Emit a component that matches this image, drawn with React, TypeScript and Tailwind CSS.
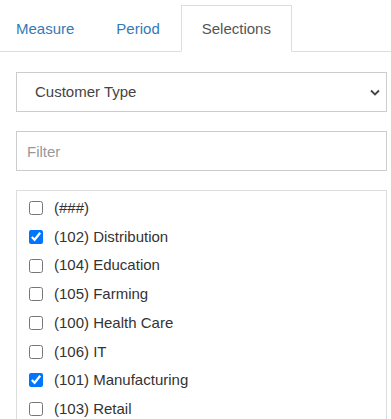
import { useState } from 'react';

const tabs = ['Measure', 'Period', 'Selections'];

const items = [
  { label: '(###)', checked: false },
  { label: '(102) Distribution', checked: true },
  { label: '(104) Education', checked: false },
  { label: '(105) Farming', checked: false },
  { label: '(100) Health Care', checked: false },
  { label: '(106) IT', checked: false },
  { label: '(101) Manufacturing', checked: true },
  { label: '(103) Retail', checked: false },
];

export default function App() {
  const [active, setActive] = useState('Selections');
  const [filter, setFilter] = useState('');

  return (
    <div className="w-[391px] h-[419px] overflow-hidden bg-white pt-[5px] font-['Liberation_Sans',Arial,sans-serif] text-[15px] text-[#555]">
      {/* Tabs */}
      <div className="flex border-b border-[#ddd] -ml-[5px]">
        {tabs.map((tab) => {
          const isActive = tab === active;
          return (
            <button
              key={tab}
              type="button"
              onClick={() => setActive(tab)}
              className={`-mb-px px-5 py-3 leading-[21px] border ${
                isActive
                  ? 'border-[#ddd] border-b-white bg-white text-[#555]'
                  : 'border-transparent text-[#337ab7]'
              }`}
            >
              {tab}
            </button>
          );
        })}
      </div>

      <div className="pl-4 pr-1 pt-5 flex flex-col gap-[19px]">
        {/* Dropdown */}
        <div className="relative h-10 border border-[#ccc] bg-white flex items-center pl-[18px]">
          <span className="text-[#444]">Customer Type</span>
          <svg
            className="absolute right-[6px] top-[16px]"
            width="10"
            height="7"
            viewBox="0 0 10 7"
            fill="none"
            stroke="#444"
            strokeWidth="1.8"
          >
            <path d="M1 1.5l4 4 4-4" />
          </svg>
        </div>

        {/* Filter */}
        <input
          value={filter}
          onChange={(e) => setFilter(e.target.value)}
          placeholder="Filter"
          className="h-10 border border-[#ccc] px-[10px] outline-none text-[#444] placeholder:text-[#999]"
        />

        {/* List */}
        <div className="border border-[#ddd] border-b-0 pt-[3px] h-[240px]">
          {items
            .filter((i) => i.label.toLowerCase().includes(filter.toLowerCase()))
            .map((item) => (
              <label key={item.label} className="flex items-center h-[28.7px] pl-3 text-[#333]">
                <input
                  type="checkbox"
                  defaultChecked={item.checked}
                  className="m-0 w-[14px] h-[14px]"
                />
                <span className="ml-[11px]">{item.label}</span>
              </label>
            ))}
        </div>
      </div>
    </div>
  );
}
